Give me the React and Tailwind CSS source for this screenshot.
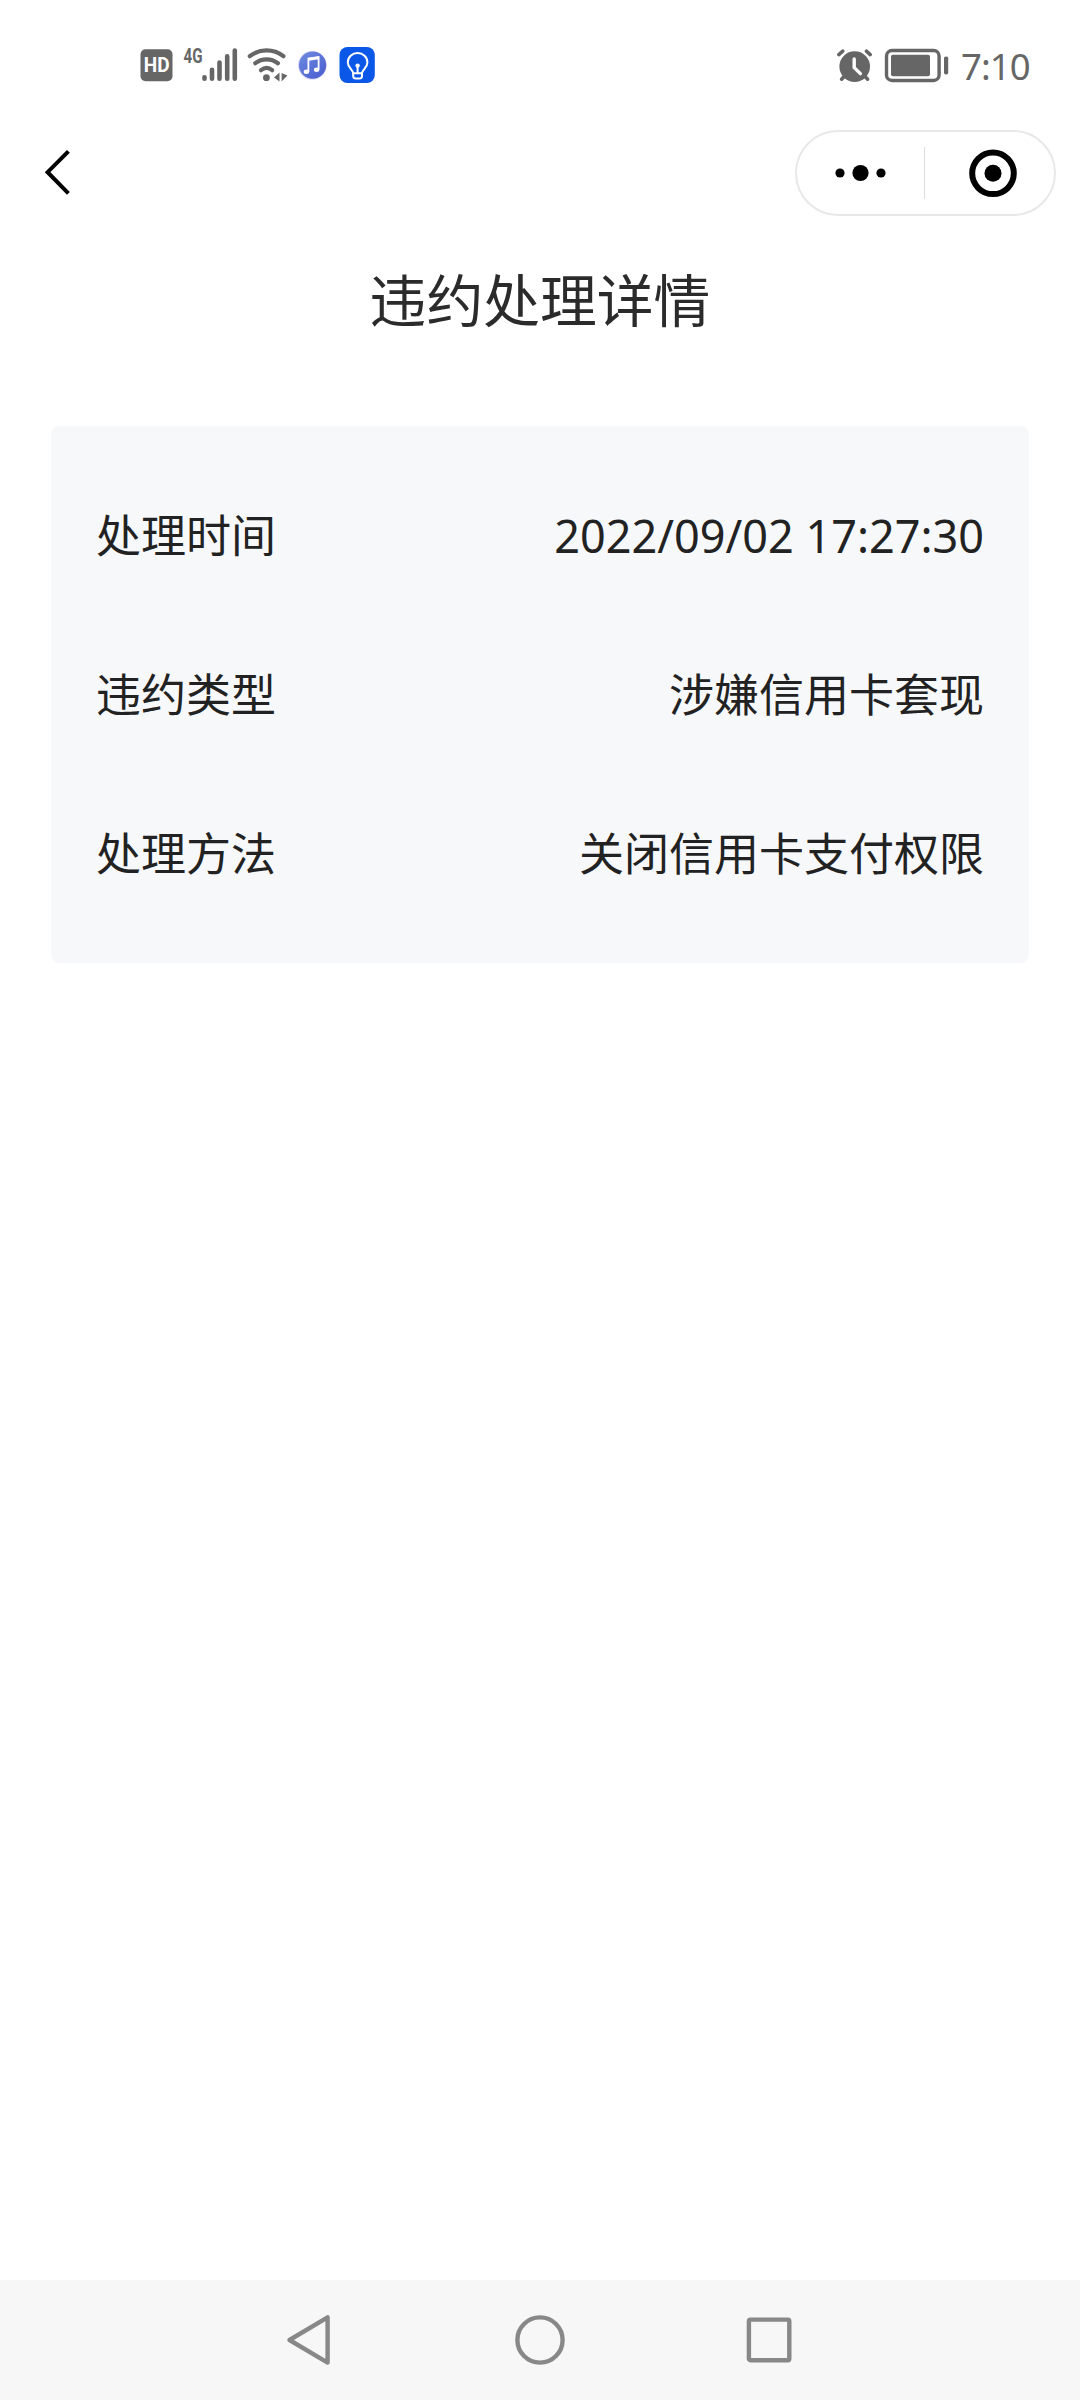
import React from "react";

const details = [
  { label: "处理时间", value: "2022/09/02 17:27:30" },
  { label: "违约类型", value: "涉嫌信用卡套现" },
  { label: "处理方法", value: "关闭信用卡支付权限" },
];

const HdIcon = () => (
  <svg width="34" height="38" viewBox="0 0 34 38">
    <rect x="0.5" y="3.3" width="32" height="32" rx="5" fill="#666" />
    <text
      x="3.8"
      y="26.3"
      fontSize="19.5"
      fontWeight="700"
      textLength="25.8"
      lengthAdjust="spacingAndGlyphs"
      fill="#fff"
      className="font-['Roboto',sans-serif]"
    >
      HD
    </text>
  </svg>
);

const SignalIcon = () => (
  <svg width="58" height="38" viewBox="0 0 58 38">
    <text
      x="1.6"
      y="16.6"
      fontSize="19.5"
      fontWeight="700"
      textLength="19"
      lengthAdjust="spacingAndGlyphs"
      fill="#666"
      className="font-['Roboto',sans-serif]"
    >
      4G
    </text>
    <g stroke="#666" strokeWidth="4.6" strokeLinecap="round">
      <path d="M22.5 31.2V32.8M30 23.7V32.8M37.5 16.6V32.8M45.2 10.4V32.8M52.8 4.6V32.8" />
    </g>
  </svg>
);

const WifiIcon = () => (
  <svg width="44" height="38" viewBox="0 0 44 38" fill="none">
    <g stroke="#666" strokeWidth="4.2" strokeLinecap="round">
      <path d="M3.8 10.2C13.5 2.4 27.5 2.4 37.4 10.2" />
      <path d="M9.3 17.2C16 12 25 12 31.9 17.2" />
      <path d="M15 24.2C18.5 21.4 22.8 21.4 26.2 24.2" />
    </g>
    <circle cx="20.4" cy="31.7" r="3.4" fill="#666" />
    <path d="M33.5 26.5V35.5L28 31.5Z" fill="#666" />
    <path d="M35.6 27V35.5L41.4 29.5Z" fill="#666" />
  </svg>
);

const MusicIcon = () => (
  <svg width="30" height="38" viewBox="0 0 30 38">
    <defs>
      <linearGradient id="music" x1="0" y1="0" x2="0.8" y2="1">
        <stop offset="0" stopColor="#6f8be0" />
        <stop offset="1" stopColor="#4c5fd0" />
      </linearGradient>
    </defs>
    <circle cx="14.3" cy="19.3" r="14.3" fill="#d9d4f7" />
    <circle cx="14.6" cy="19.2" r="13.6" fill="url(#music)" />
    <path d="M10.4 26V12.6L20.6 11V23.8" fill="none" stroke="#fff" strokeWidth="1.8" />
    <path d="M10.4 13.4L20.6 11.8" stroke="#fff" strokeWidth="2.8" />
    <ellipse cx="8.4" cy="25.7" rx="2.7" ry="2.2" fill="#fff" />
    <ellipse cx="18.6" cy="23.8" rx="2.7" ry="2.2" fill="#fff" />
  </svg>
);

const BulbIcon = () => (
  <svg width="38" height="38" viewBox="0 0 38 38" fill="none">
    <rect x="1.5" y="1" width="35.3" height="36" rx="8" fill="#0b57e8" />
    <g stroke="#fff" strokeWidth="2" strokeLinecap="round" strokeLinejoin="round">
      <path d="M15.2 27.3C15.2 23.6 9.8 22 9.8 16.4A9.8 9.4 0 0 1 29.4 16.4C29.4 22 24 23.6 24 27.3" />
      <path d="M15.2 27.3V30C15.2 32 16.4 32.6 17.8 32.6H21.4C22.8 32.6 24 32 24 30V27.3" />
      <path d="M15.2 27.3H24M19.6 20V26.5" />
    </g>
    <circle cx="19.6" cy="19.6" r="2.2" fill="#fff" />
  </svg>
);

const AlarmIcon = () => (
  <svg width="38" height="38" viewBox="0 0 38 38" fill="none">
    <circle cx="18.7" cy="20.6" r="15.3" fill="#666" />
    <g stroke="#666" strokeWidth="3.6" strokeLinecap="round">
      <path d="M2.8 8.6L6.8 5.2M34.2 8.6L30.4 5.2" />
      <path d="M5.6 33.2L9 29.6M31.6 33.2L28.2 29.6" />
    </g>
    <path d="M18.2 13V21.6L24.4 27.6" stroke="#fff" strokeWidth="3.4" strokeLinecap="round" />
  </svg>
);

const BatteryIcon = () => (
  <svg width="66" height="38" viewBox="0 0 66 38" fill="none">
    <rect x="2.5" y="4.5" width="52.6" height="30" rx="5.5" stroke="#666" strokeWidth="3.4" />
    <rect x="7" y="8.8" width="39" height="21.4" rx="2" fill="#666" />
    <rect x="60" y="10.5" width="4.2" height="18" rx="1.8" fill="#666" />
  </svg>
);

const StatusBar = () => (
  <div className="h-[130px] pt-[46px] pl-[140px] pr-[48px] flex items-start justify-between">
    <div className="flex">
      <HdIcon />
      <div className="ml-2">
        <SignalIcon />
      </div>
      <div className="ml-1.5">
        <WifiIcon />
      </div>
      <div className="ml-2">
        <MusicIcon />
      </div>
      <div className="ml-2.5">
        <BulbIcon />
      </div>
    </div>
    <div className="flex">
      <AlarmIcon />
      <div className="ml-2.5">
        <BatteryIcon />
      </div>
      <span className="ml-[11px] mt-px w-[71px] h-[38px] leading-[38px] text-[36.5px] text-[#666] tracking-[-0.9px] whitespace-nowrap font-['Noto_Sans',sans-serif]">
        7:10
      </span>
    </div>
  </div>
);

const NavBar = () => (
  <div className="h-[86px] pl-[40px] pr-[24px] flex items-center justify-between">
    <button>
      <svg width="36" height="50" viewBox="0 0 36 50" fill="none">
        <path d="M28.4 3.4L7.6 24.2L28.4 45.4" stroke="#000" strokeWidth="4" />
      </svg>
    </button>
    <div className="w-[261px] h-[86px] rounded-full border-2 border-[#e8e8e8] flex items-center">
      <div className="w-[127px] flex justify-center">
        <svg width="52" height="20" viewBox="0 0 52 20">
          <circle cx="5" cy="10" r="4.6" />
          <circle cx="25.5" cy="10" r="8.1" />
          <circle cx="46" cy="10" r="4.6" />
        </svg>
      </div>
      <div className="w-px h-[52px] bg-[#dcdcdc]" />
      <div className="flex-1 flex justify-center pl-[6px]">
        <svg width="50" height="50" viewBox="0 0 50 50" fill="none">
          <circle cx="25" cy="25.3" r="20.8" stroke="#000" strokeWidth="6" />
          <circle cx="25" cy="25.3" r="8.5" fill="#000" />
        </svg>
      </div>
    </div>
  </div>
);

const BottomNav = () => (
  <div className="h-[120px] bg-[#f7f7f7] px-[282px] flex items-center justify-between">
    <svg width="54" height="54" viewBox="0 0 54 54" fill="none" stroke="#888" strokeWidth="4.4" strokeLinejoin="round">
      <path d="M45.6 4.4V49.6L7.5 27Z" />
    </svg>
    <svg width="54" height="54" viewBox="0 0 54 54" fill="none" stroke="#888" strokeWidth="4.4">
      <circle cx="27" cy="27" r="22.6" />
    </svg>
    <svg width="54" height="54" viewBox="0 0 54 54" fill="none" stroke="#888" strokeWidth="4.4">
      <rect x="4.9" y="6.6" width="40.4" height="40.6" rx="1.5" />
    </svg>
  </div>
);

const App = () => {
  return (
    <div className="w-[1080px] h-[2400px] bg-white flex flex-col font-['Noto_Sans','Noto_Sans_CJK_SC',sans-serif]">
      <StatusBar />
      <NavBar />

      <div className="flex-1 px-[51px]">
        <h1 className="mt-[44px] h-[80px] leading-[80px] text-center text-[56.8px] text-[#2b2b2b]">
          违约处理详情
        </h1>

        <div className="mt-[86px] h-[537px] px-[45px] pt-[78px] rounded-lg bg-[#f7f8fa] flex flex-col gap-[95px] text-[45px] text-[#222]">
          {details.map((item) => (
            <div key={item.label} className="h-16 leading-[64px] flex justify-between whitespace-nowrap">
              <span>{item.label}</span>
              <span>{item.value}</span>
            </div>
          ))}
        </div>
      </div>

      <BottomNav />
    </div>
  );
};

export default App;
